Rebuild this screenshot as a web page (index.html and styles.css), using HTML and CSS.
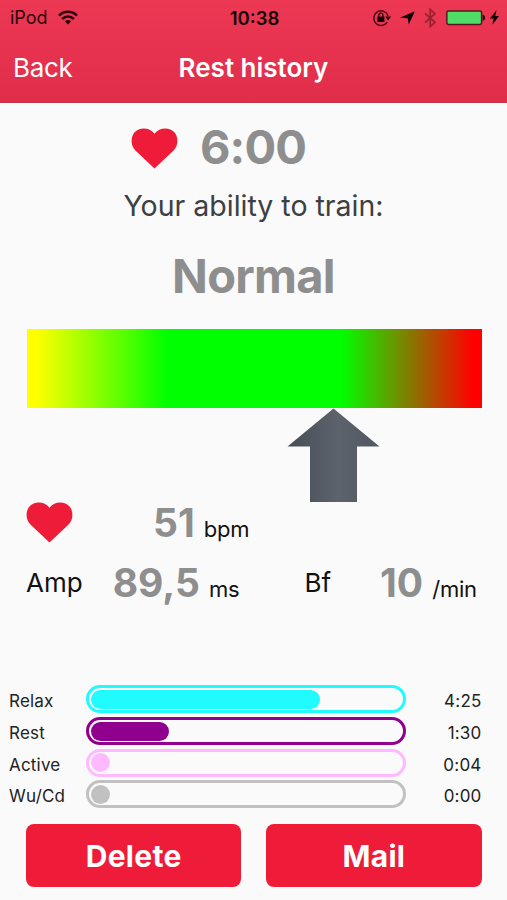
FILE: index.html
```html
<!DOCTYPE html>
<html lang="en">
<head>
    <meta charset="UTF-8">
    <meta name="viewport" content="width=device-width, initial-scale=1.0">
    <title>Rest history</title>
    <link rel="stylesheet" href="styles.css">
</head>
<body>

    <header class="header">
        <div class="status-bar">
            <div class="status-left">
                <span class="device">iPod</span>
                <svg class="wifi" width="20" height="15" viewBox="0 0 20 15" fill="none" stroke="#2b060c" stroke-width="2.5">
                    <path d="M1 5.600C6 .6 14 .6 19 5.600"/>
                    <path d="M4.200 9c3.400-3.300 8.200-3.300 11.600 0"/>
                    <path d="M10 14.600l-3.200-3.300c1.800-1.700 4.600-1.700 6.400 0z" fill="#2b060c" stroke="none"/>
                </svg>
            </div>
            <span class="clock">10:38</span>
            <div class="status-right">
                <svg class="lock" width="20" height="18" viewBox="0 0 20 18">
                    <path d="M15.200 13.200A7.300 7.300 0 1 1 16.100 7" fill="none" stroke="#4a0d17" stroke-width="1.500"/>
                    <path d="M13.200 7.400h5.800l-2.900 4.200z" fill="#1c0307"/>
                    <rect x="5.400" y="7.600" width="7" height="5.400" fill="#1c0307"/>
                    <path d="M6.900 8V6.200a2 2 0 0 1 4 0V8" fill="none" stroke="#1c0307" stroke-width="1.300"/>
                </svg>
                <svg class="location" width="15" height="14" viewBox="0 0 15 14">
                    <path d="M14.800.3L8.800 13.600 7.700 7.300 0 6.800z" fill="#120103"/>
                </svg>
                <svg class="bluetooth" width="13" height="20" viewBox="0 0 13 20">
                    <path d="M1 5.300l10 9-4.800 4.300V1.400L11 5.700l-10 9" fill="none" stroke="#97212f" stroke-width="1.700"/>
                </svg>
                <svg class="battery" width="40" height="16" viewBox="0 0 40 16">
                    <rect x=".8" y="1" width="34.800" height="13.600" rx="2" fill="#4fdc67" stroke="#5e1420" stroke-width="1.500"/>
                    <path d="M36.600 4.800c3.400.4 3.400 5.600 0 6z" fill="#2b060c"/>
                </svg>
                <svg class="bolt" width="9" height="15" viewBox="0 0 9 15">
                    <path d="M6.600 0L0 8.500h3.600L2.400 14.800 9 6.100H5.200z" fill="#120103"/>
                </svg>
            </div>
        </div>
        <nav class="nav">
            <a class="back">Back</a>
            <h1>Rest history</h1>
        </nav>
    </header>

    <main>
        <div class="duration">
            <svg class="heart" width="47" height="41" viewBox="0 0 48 41" preserveAspectRatio="none">
                <path d="M24 40.500L4.500 22.500C-1 17 0 8.500 3.500 4.500 8.500-1 19-1 24 5.800 29-1 39.500-1 44.500 4.500 48 8.500 49 17 43.500 22.500z"/>
            </svg>
            <span class="duration-value">6:00</span>
        </div>

        <p class="question">Your ability to train:</p>
        <h2>Normal</h2>

        <div class="scale"></div>
        <svg class="arrow" width="93" height="95" viewBox="0 0 93 95">
            <defs>
                <linearGradient id="steel" x1="0" y1="0" x2="1" y2="0">
                    <stop offset="0" stop-color="#484d55"/>
                    <stop offset=".55" stop-color="#5c636c"/>
                    <stop offset="1" stop-color="#505760"/>
                </linearGradient>
            </defs>
            <path d="M46.500.5L92.500 38.500H70V94H23V38.500H.5z" fill="url(#steel)"/>
        </svg>

        <div class="metrics pulse">
            <svg class="heart" width="47" height="41" viewBox="0 0 48 41" preserveAspectRatio="none">
                <path d="M24 40.500L4.500 22.500C-1 17 0 8.500 3.500 4.500 8.500-1 19-1 24 5.800 29-1 39.500-1 44.500 4.500 48 8.500 49 17 43.500 22.500z"/>
            </svg>
            <span class="value bpm">51</span>
            <span class="unit">bpm</span>
        </div>
        <div class="metrics">
            <span class="name amp">Amp</span>
            <span class="value amp-value">89,5</span>
            <span class="unit ms">ms</span>
            <span class="name bf">Bf</span>
            <span class="value bf-value">10</span>
            <span class="unit">/min</span>
        </div>

        <div class="phases">
            <div class="phase relax">
                <span class="phase-name">Relax</span>
                <div class="bar"><div class="fill" style="width: 229px"></div></div>
                <span class="time">4:25</span>
            </div>
            <div class="phase rest">
                <span class="phase-name">Rest</span>
                <div class="bar"><div class="fill" style="width: 78px"></div></div>
                <span class="time">1:30</span>
            </div>
            <div class="phase active">
                <span class="phase-name">Active</span>
                <div class="bar"><div class="fill" style="width: 19px"></div></div>
                <span class="time">0:04</span>
            </div>
            <div class="phase warmup">
                <span class="phase-name">Wu/Cd</span>
                <div class="bar"><div class="fill" style="width: 19px"></div></div>
                <span class="time">0:00</span>
            </div>
        </div>

        <div class="buttons">
            <button>Delete</button>
            <button>Mail</button>
        </div>
    </main>

</body>
</html>
```
FILE: styles.css
```css
* {
    box-sizing: border-box;
}
body {
    font-family: Inter, 'Liberation Sans', sans-serif;
    background: #fafafa;
    color: #111;
    margin: 0;
    height: 900px;
    overflow: hidden;
}
svg {
    display: block;
    flex: none;
}

/* Header */
.header {
    height: 102.5px;
    background: linear-gradient(#ed3854, #e02d49);
    border-bottom: 1px solid #c4334a;
}
.status-bar {
    display: grid;
    grid-template-columns: 1fr auto 1fr;
    align-items: center;
    height: 35px;
    padding: 0 8px 0 10px;
    font-size: 18px;
    color: #2b060c;
}
.status-left {
    display: flex;
    align-items: center;
    gap: 10px;
}
.clock {
    font-size: 18.5px;
    font-weight: 600;
    line-height: 20px;
    color: #120103;
}
.status-right {
    display: flex;
    justify-content: flex-end;
    align-items: center;
}
.lock {
    margin-right: 8px;
}
.location {
    margin-right: 9px;
}
.bluetooth {
    margin-right: 9px;
}
.battery {
    margin-right: 4px;
}
.nav {
    display: grid;
    grid-template-columns: 1fr auto 1fr;
    align-items: center;
    height: 65px;
    padding: 0 13px;
    font-size: 26px;
    color: #fff;
}
.back {
    letter-spacing: -0.3px;
}
.nav h1 {
    margin: 0;
    font-size: 26px;
    font-weight: 600;
}

/* Result */
.duration {
    display: flex;
    align-items: center;
    height: 60px;
    margin: 15.5px 0 0 131px;
}
.heart {
    fill: #ee1b39;
}
.duration-value {
    margin: -3px 0 0 22px;
    font-size: 47px;
    font-weight: 700;
    letter-spacing: -0.9px;
    color: #8e8e8e;
}
.question {
    margin: 8px 0 0;
    font-size: 28.5px;
    line-height: 40px;
    text-align: center;
    color: #3c4043;
}
h2 {
    margin: 20px 0 0;
    font-size: 47px;
    font-weight: 700;
    letter-spacing: -0.7px;
    line-height: 60px;
    text-align: center;
    color: #8e8e8e;
}
.scale {
    height: 79px;
    margin: 23px 25.5px 0 26.5px;
    background: linear-gradient(90deg, #ff0 0, #ff0 2%, #0f0 31%, #0f0 69%, #f00 98%);
}
.arrow {
    margin-left: 287px;
}

/* Measurements */
.metrics {
    display: flex;
    align-items: baseline;
    height: 60px;
    padding-left: 26px;
    line-height: 60px;
    white-space: nowrap;
}
.pulse .heart {
    align-self: center;
}
.pulse {
    margin-top: -10.5px;
}
.value {
    font-size: 39px;
    font-weight: 700;
    color: #8e8e8e;
}
.bpm {
    margin-left: 80px;
}
.unit {
    margin-left: 9px;
    font-size: 22px;
    letter-spacing: -0.2px;
}
.name {
    align-self: flex-start;
    font-size: 26px;
}
.amp-value {
    margin-left: 30px;
}
.bf {
    margin-left: 65px;
}
.bf-value {
    margin-left: 49px;
}

/* Phases */
.phases {
    margin-top: 71px;
}
.phase {
    display: grid;
    grid-template-columns: 77px 320px 75.5px;
    align-items: center;
    height: 31.7px;
    padding-left: 9px;
    font-size: 17px;
    color: #222;
}
.phase-name,
.time {
    padding-top: 4px;
    letter-spacing: 0.2px;
}
.bar {
    height: 28px;
    padding: 1.5px;
    border: 3px solid var(--color);
    border-radius: 14px;
}
.fill {
    height: 19px;
    border-radius: 10px;
    background: var(--color);
}
.time {
    text-align: right;
}
.relax {
    --color: #1ffbff;
}
.rest {
    --color: #90008f;
}
.active {
    --color: #ffbaff;
}
.warmup {
    --color: #c1c1c1;
}

/* Actions */
.buttons {
    display: grid;
    grid-template-columns: 1fr 1fr;
    gap: 25px;
    margin: 14px 25.5px 0 26px;
}
button {
    height: 63px;
    padding: 0;
    border: none;
    border-radius: 8px;
    background-color: #ee1b39;
    color: #fff;
    font-family: inherit;
    font-size: 30px;
    font-weight: 700;
    letter-spacing: 0.3px;
}
```
